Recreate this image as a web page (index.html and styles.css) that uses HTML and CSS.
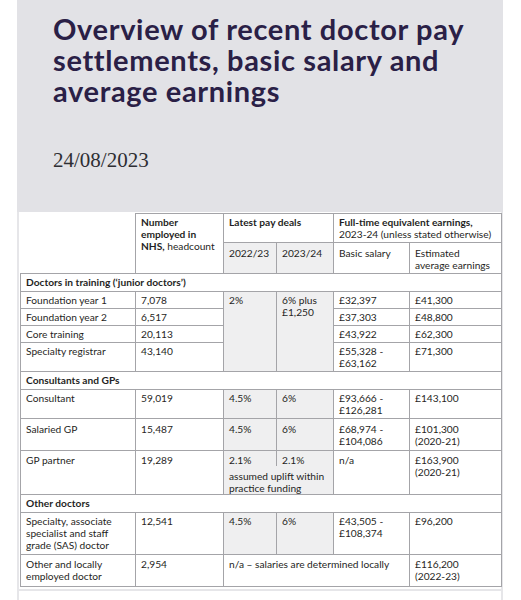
FILE: index.html
```html
<!DOCTYPE html>
<html lang="en">
<head>
<meta charset="utf-8">
<title>Overview of recent doctor pay settlements</title>
<link rel="stylesheet" href="styles.css">
</head>
<body>
<div class="page">
  <header class="hero">
    <h1 class="hero-title">Overview of recent doctor pay settlements, basic salary and average earnings</h1>
    <p class="hero-date">24/08/2023</p>
  </header>
  <div class="content">
    <div class="table-wrap">
      <table class="pay-table">
        <colgroup>
          <col class="c1"><col class="c2"><col class="c3"><col class="c4"><col class="c5"><col class="c6">
        </colgroup>
        <thead>
          <tr class="head-1">
            <th class="corner" rowspan="2"></th>
            <th rowspan="2"><b>Number<br>employed in<br>NHS,</b> headcount</th>
            <th colspan="2"><b>Latest pay deals</b></th>
            <th colspan="2"><b>Full-time equivalent earnings,</b><br>2023-24 (unless stated otherwise)</th>
          </tr>
          <tr class="head-2">
            <th class="deal">2022/23</th>
            <th class="deal">2023/24</th>
            <th>Basic salary</th>
            <th>Estimated average earnings</th>
          </tr>
        </thead>
        <tbody>
          <tr class="section"><td colspan="6">Doctors in training (‘junior doctors’)</td></tr>
          <tr>
            <td>Foundation year 1</td><td>7,078</td>
            <td class="deal" rowspan="4">2%</td><td class="deal" rowspan="4">6% plus £1,250</td>
            <td>£32,397</td><td>£41,300</td>
          </tr>
          <tr><td>Foundation year 2</td><td>6,517</td><td>£37,303</td><td>£48,800</td></tr>
          <tr><td>Core training</td><td>20,113</td><td>£43,922</td><td>£62,300</td></tr>
          <tr><td>Specialty registrar</td><td>43,140</td><td>£55,328 -<br>£63,162</td><td>£71,300</td></tr>

          <tr class="section"><td colspan="6">Consultants and GPs</td></tr>
          <tr>
            <td>Consultant</td><td>59,019</td><td class="deal">4.5%</td><td class="deal">6%</td>
            <td>£93,666 -<br>£126,281</td><td>£143,100</td>
          </tr>
          <tr class="roomy">
            <td>Salaried GP</td><td>15,487</td><td class="deal">4.5%</td><td class="deal">6%</td>
            <td>£68,974 -<br>£104,086</td><td>£101,300<br>(2020-21)</td>
          </tr>
          <tr class="split-top">
            <td rowspan="2">GP partner</td><td rowspan="2">19,289</td>
            <td class="deal">2.1%</td><td class="deal">2.1%</td>
            <td rowspan="2">n/a</td><td rowspan="2">£163,900<br>(2020-21)</td>
          </tr>
          <tr class="split-bottom">
            <td class="deal" colspan="2">assumed uplift within practice funding</td>
          </tr>

          <tr class="section"><td colspan="6">Other doctors</td></tr>
          <tr class="sas">
            <td>Specialty, associate specialist and staff grade (SAS) doctor</td><td>12,541</td>
            <td class="deal">4.5%</td><td class="deal">6%</td>
            <td>£43,505 -<br>£108,374</td><td>£96,200</td>
          </tr>
          <tr class="local">
            <td>Other and locally employed doctor</td><td>2,954</td>
            <td colspan="3">n/a – salaries are determined locally</td>
            <td>£116,200<br>(2022-23)</td>
          </tr>
        </tbody>
      </table>
    </div>
  </div>
</div>
</body>
</html>
```
FILE: styles.css
```css
html, body {
  margin: 0;
  padding: 0;
  background: #ffffff;
}

body {
  font-family: Lato, "Noto Sans", sans-serif;
  color: #222222;
}

.page {
  margin: 0 18px 0 17px;
}

.hero {
  background: #e2e2e6;
  height: 212px;
  box-sizing: border-box;
  padding: 13px 30px 0 36px;
}

.hero-title {
  margin: 0;
  font-family: Lato, "Noto Sans", sans-serif;
  font-weight: 700;
  font-size: 29px;
  line-height: 31px;
  letter-spacing: 0.65px;
  color: #2a2046;
}

.hero-date {
  margin: 42px 0 0 0;
  font-family: "Liberation Serif", serif;
  font-size: 21px;
  line-height: 24px;
  color: #2e2e33;
}

.content {
  border-left: 2px solid #e6e6e9;
  border-right: 2px solid #e6e6e9;
  min-height: 400px;
}

.table-wrap {
  padding: 1px 0 2px 1px;
  border-bottom: 2px solid #e6e6e9;
}

.pay-table {
  border-collapse: collapse;
  table-layout: fixed;
  width: 481px;
  font-size: 10.2px;
  line-height: 12px;
  color: #1f1f24;
}

.pay-table col.c1 { width: 115px; }
.pay-table col.c2 { width: 88px; }
.pay-table col.c3 { width: 53px; }
.pay-table col.c4 { width: 57px; }
.pay-table col.c5 { width: 76px; }
.pay-table col.c6 { width: 92px; }

.pay-table th,
.pay-table td {
  border: 1px solid #a4a4a8;
  padding: 2px 5px 2px 5px;
  vertical-align: top;
  text-align: left;
  font-weight: 400;
}

.pay-table b {
  font-weight: 700;
}

.pay-table th.corner {
  border-top: none;
  border-left: none;
}

.head-2 th {
  padding-top: 4px;
}

.pay-table .deal {
  background: #efeff0;
}

.section td {
  font-weight: 700;
  background: #ffffff;
  padding-bottom: 3px;
}

.roomy td {
  padding-top: 4px;
  padding-bottom: 3px;
}

.split-top td {
  padding-top: 3px;
}

.split-top td.deal {
  padding-bottom: 0;
  border-bottom: none;
}

.split-bottom td.deal {
  border-top: none;
  padding-top: 4px;
  padding-bottom: 0;
}

.sas td {
  padding-bottom: 3px;
}

.local td {
  padding-top: 3px;
  padding-bottom: 4px;
}
```
